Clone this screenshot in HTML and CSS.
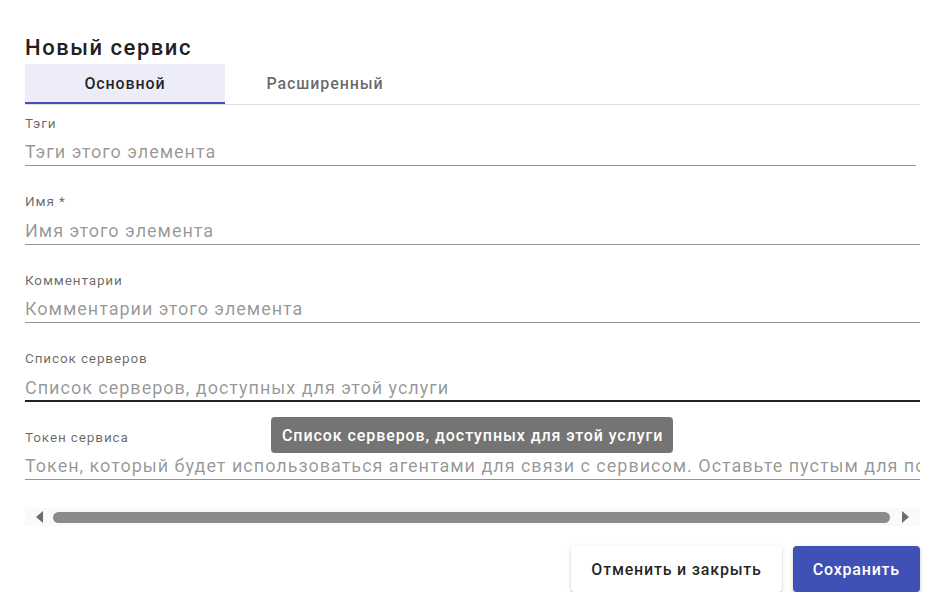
FILE: index.html
```html
<!DOCTYPE html>
<html lang="ru">
<head>
<meta charset="utf-8">
<title>Новый сервис</title>
<link rel="stylesheet" href="styles.css">
</head>
<body>
<div class="dialog">
  <h2 class="title">Новый сервис</h2>
  <div class="tabs">
    <div class="tab active">Основной</div>
    <div class="tab">Расширенный</div>
  </div>
  <div class="scroll">
    <div class="form">
      <div class="field short">
        <div class="label">Тэги</div>
        <div class="input">Тэги этого элемента</div>
      </div>
      <div class="field">
        <div class="label">Имя *</div>
        <div class="input">Имя этого элемента</div>
      </div>
      <div class="field">
        <div class="label">Комментарии</div>
        <div class="input">Комментарии этого элемента</div>
      </div>
      <div class="field focused">
        <div class="label">Список серверов</div>
        <div class="input">Список серверов, доступных для этой услуги</div>
      </div>
      <div class="field wide">
        <div class="label">Токен сервиса</div>
        <div class="input">Токен, который будет использоваться агентами для связи с сервисом. Оставьте пустым для подключения без токена</div>
      </div>
    </div>
  </div>
  <div class="hscroll">
    <div class="arrow"><span class="tri left"></span></div>
    <div class="thumb"></div>
    <div class="arrow end"><span class="tri right"></span></div>
  </div>
  <div class="actions">
    <button class="btn cancel">Отменить и закрыть</button>
    <button class="btn save">Сохранить</button>
  </div>
  <div class="tooltip">Список серверов, доступных для этой услуги</div>
</div>
</body>
</html>
```

FILE: styles.css
```css
html, body {
  margin: 0;
  padding: 0;
  background: #fff;
}
body {
  font-family: Roboto, "Noto Sans", sans-serif;
  color: rgba(0, 0, 0, 0.87);
}
.dialog {
  position: relative;
  padding: 32px 27px 0 25px;
}
.title {
  margin: 0;
  font-size: 22px;
  font-weight: 500;
  line-height: 32px;
  letter-spacing: 0.07em;
  color: #212121;
}
.tabs {
  display: flex;
  border-bottom: 1px solid #e0e0e0;
}
.tab {
  width: 200px;
  height: 38px;
  border-bottom: 2px solid transparent;
  display: flex;
  align-items: center;
  justify-content: center;
  font-size: 16px;
  font-weight: 500;
  letter-spacing: 0.055em;
  color: rgba(0, 0, 0, 0.6);
}
.tab.active {
  background: #ecedf8;
  border-bottom-color: #3f51b5;
  color: rgba(0, 0, 0, 0.87);
}
.scroll {
  overflow: hidden;
}
.form {
  padding-top: 9px;
  padding-bottom: 28px;
}
.field {
  margin-bottom: 26.3px;
}
.field:last-child {
  margin-bottom: 0;
}
.field.short {
  margin-right: 4px;
}
.field.wide {
  width: calc(100% + 18px);
}
.label {
  font-size: 13.5px;
  line-height: 18px;
  letter-spacing: 0.065em;
  color: rgba(0, 0, 0, 0.6);
  margin-bottom: 8.2px;
}
.input {
  font-size: 18px;
  line-height: 24px;
  letter-spacing: 0.055em;
  padding-bottom: 1px;
  color: rgba(0, 0, 0, 0.42);
  white-space: nowrap;
  overflow: hidden;
  border-bottom: 1px solid rgba(0, 0, 0, 0.42);
}
.field.focused .input {
  padding-bottom: 0;
  border-bottom: 2px solid rgba(0, 0, 0, 0.87);
}
.hscroll {
  display: flex;
  align-items: center;
  height: 18px;
  background: #fafafa;
}
.arrow {
  width: 28px;
  height: 100%;
  display: flex;
  align-items: center;
  justify-content: center;
}
.arrow.end {
  width: 30px;
}
.tri {
  width: 0;
  height: 0;
  border-top: 6px solid transparent;
  border-bottom: 6px solid transparent;
}
.tri.left {
  border-right: 7px solid #6e6e6e;
}
.tri.right {
  border-left: 7px solid #6e6e6e;
}
.thumb {
  flex: 1;
  height: 11px;
  border-radius: 6px;
  background: #8a8a8a;
}
.actions {
  display: flex;
  justify-content: flex-end;
  gap: 11px;
  padding-top: 20px;
}
.btn {
  height: 46px;
  padding: 0 20px;
  border: none;
  border-radius: 4px;
  font-family: Roboto, "Noto Sans", sans-serif;
  font-size: 16px;
  font-weight: 500;
  letter-spacing: 0.05em;
  cursor: pointer;
  box-shadow: 0 3px 1px -2px rgba(0, 0, 0, 0.2), 0 2px 2px 0 rgba(0, 0, 0, 0.14), 0 1px 5px 0 rgba(0, 0, 0, 0.12);
}
.btn.cancel {
  background: #fff;
  color: rgba(0, 0, 0, 0.87);
}
.btn.save {
  background: #3f51b5;
  color: #fff;
}
.tooltip {
  position: absolute;
  left: 271px;
  top: 417px;
  height: 36px;
  padding: 0 10px 0 11px;
  display: flex;
  align-items: center;
  border-radius: 4px;
  background: rgba(97, 97, 97, 0.88);
  color: #fff;
  font-size: 16px;
  font-weight: 500;
  letter-spacing: 0.058em;
  white-space: nowrap;
}
```
